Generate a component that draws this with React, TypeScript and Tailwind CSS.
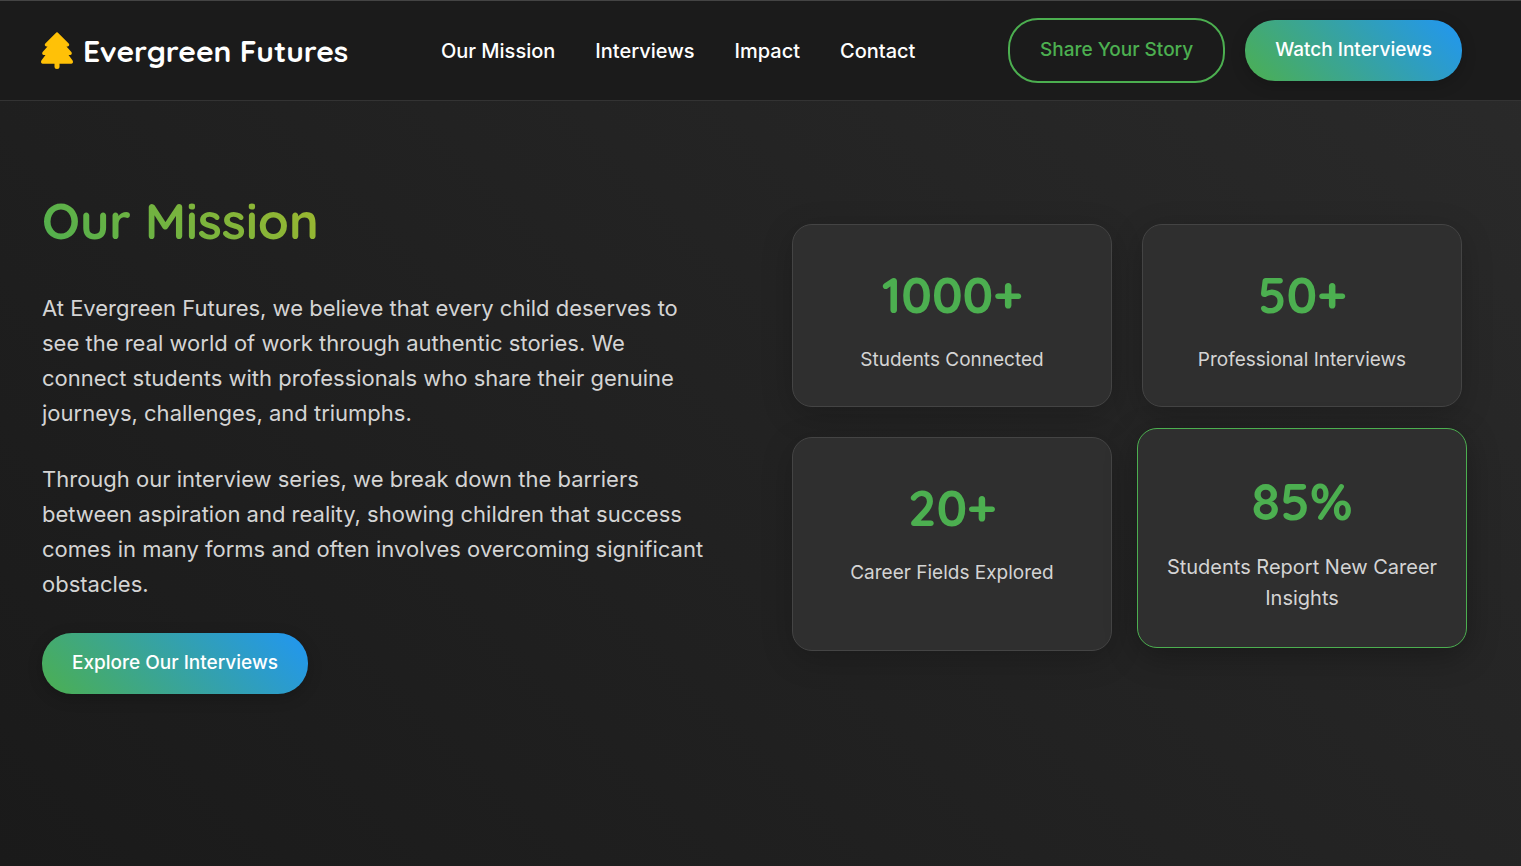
const navLinks = [
  { label: "Our Mission", href: "#mission" },
  { label: "Interviews", href: "#interviews" },
  { label: "Impact", href: "#impact" },
  { label: "Contact", href: "#contact" },
];

const stats = [
  { value: "1000+", label: "Students Connected" },
  { value: "50+", label: "Professional Interviews" },
  { value: "20+", label: "Career Fields Explored" },
  { value: "85%", label: "Students Report New Career Insights", active: true },
];

const headingFont = "font-['Quicksand','Lato',sans-serif]";
const gradientButton =
  "rounded-[30px] bg-[linear-gradient(45deg,#4caf50,#2196f3)] px-[30px] pt-[14px] pb-4 text-[19px] leading-[31px] font-medium text-white shadow-[0_4px_15px_rgba(0,0,0,0.2)]";

function TreeLogo() {
  return (
    <svg
      className="h-[37px] w-8"
      viewBox="0 0 32 37"
      fill="#ffc107"
      stroke="#ffc107"
      strokeLinecap="round"
      strokeLinejoin="round"
      aria-hidden="true"
    >
      <path
        strokeWidth="2"
        d="M16 1.2 27 12.2Q27.6 13.2 26.6 13.4H23.2L29.6 20.6Q30.2 21.8 29 22H25.6L30.8 29.2Q31.4 30.6 30 30.8H2Q0.6 30.6 1.2 29.2L6.4 22H3Q1.8 21.8 2.4 20.6L8.8 13.4H5.4Q4.4 13.2 5 12.2Z"
      />
      <path strokeWidth="5" d="M16 31v3.4" />
    </svg>
  );
}

function StatCard({ value, label, active }: { value: string; label: string; active?: boolean }) {
  return (
    <div
      className={`rounded-[20px] border bg-[#2f2f2f] text-center ${
        active
          ? "-mx-[5px] -mt-[9px] mb-[3px] border-[#4caf50] px-5 pt-8 pb-[33px] text-[20px] shadow-[0_8px_32px_rgba(0,0,0,0.3)]"
          : "border-[#444444] px-[30px] pt-[30px] pb-[31px] text-[19px] shadow-[0_8px_32px_rgba(0,0,0,0.2)]"
      }`}
    >
      <div
        className={`${headingFont} leading-[80px] font-bold text-[#4caf50] ${
          active ? "mb-[11px] text-[52px]" : "mb-[9px] text-[50px]"
        }`}
      >
        {value}
      </div>
      <div className="leading-[31px] text-[#d4d4d4]">{label}</div>
    </div>
  );
}

export default function App() {
  return (
    <div className="min-h-screen bg-[linear-gradient(45deg,#1a1a1a,#2a2a2a)] font-['Inter',sans-serif] text-white">
      <header className="border-t border-b border-t-[#444444] border-b-[#333333] bg-[#1b1b1b]">
        <nav className="flex items-center justify-between py-[17px] pr-[59px] pl-[41px]">
          <a href="#" className="flex items-center gap-[10px]">
            <TreeLogo />
            <span className={`${headingFont} text-[30px] leading-[48px] font-bold`}>Evergreen Futures</span>
          </a>
          <ul className="flex gap-10">
            {navLinks.map((link) => (
              <li key={link.label}>
                <a href={link.href} className="text-[20px] leading-8 font-medium">
                  {link.label}
                </a>
              </li>
            ))}
          </ul>
          <div className="flex items-center gap-5">
            <button
              type="button"
              className="rounded-[30px] border-2 border-[#4caf50] px-[30px] pt-[14px] pb-4 text-[19px] leading-[31px] font-medium text-[#4caf50]"
            >
              Share Your Story
            </button>
            <button type="button" className={gradientButton}>
              Watch Interviews
            </button>
          </div>
        </nav>
      </header>

      <section id="mission" className="grid grid-cols-2 items-center gap-20 py-20 pr-[59px] pl-[42px]">
        <div>
          <h2
            className={`${headingFont} mb-[30px] bg-[linear-gradient(45deg,#4caf50,#ffc107)] bg-clip-text text-[50px] leading-[80px] font-bold text-transparent`}
          >
            Our Mission
          </h2>
          <p className="mb-[31px] text-[22px] leading-[35px] text-[#d4d4d4]">
            At Evergreen Futures, we believe that every child deserves to see the real world of work through
            authentic stories. We connect students with professionals who share their genuine journeys,
            challenges, and triumphs.
          </p>
          <p className="mb-[31px] text-[22px] leading-[35px] text-[#d4d4d4]">
            Through our interview series, we break down the barriers between aspiration and reality, showing
            children that success comes in many forms and often involves overcoming significant obstacles.
          </p>
          <button type="button" className={gradientButton}>
            Explore Our Interviews
          </button>
        </div>

        <div className="grid grid-cols-2 gap-[30px]">
          {stats.map((stat) => (
            <StatCard key={stat.label} {...stat} />
          ))}
        </div>
      </section>
    </div>
  );
}
